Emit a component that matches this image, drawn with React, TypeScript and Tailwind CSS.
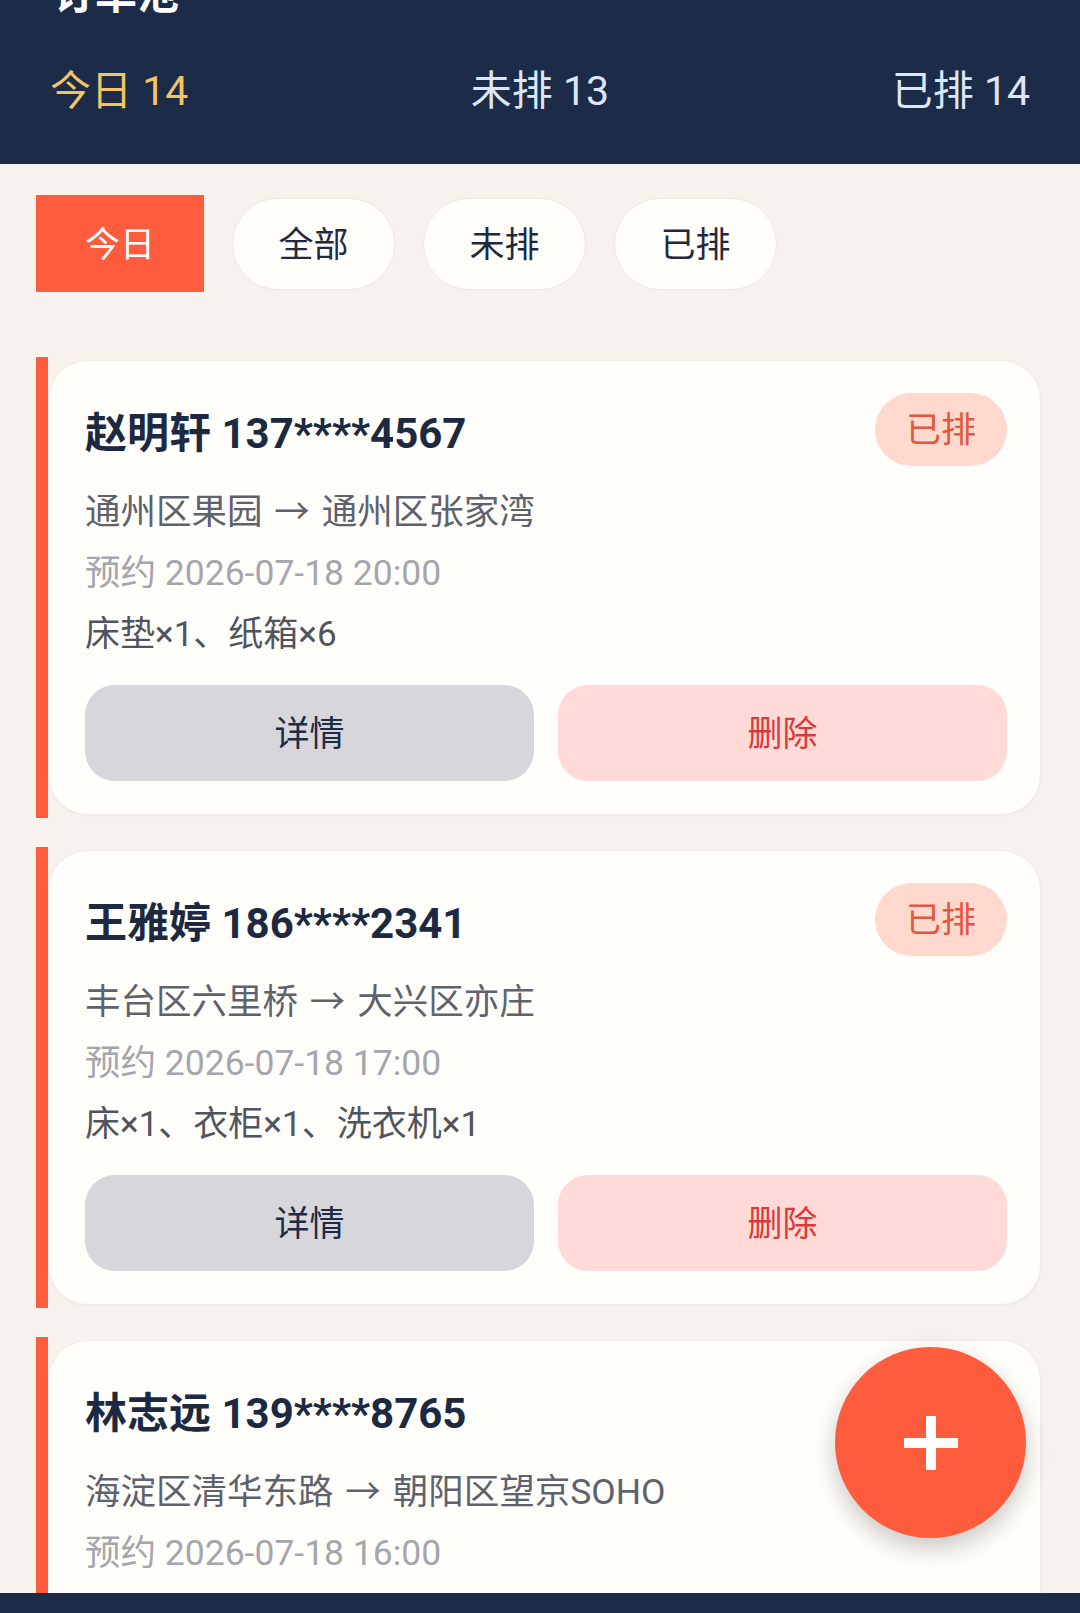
import { useState } from 'react';

interface Order {
    id: number;
    name: string;
    phone: string;
    from: string;
    to: string;
    time: string;
    items: string;
    status: '已排' | '未排';
}

const ORDERS: Order[] = [
    { id: 1, name: '赵明轩', phone: '137****4567', from: '通州区果园', to: '通州区张家湾', time: '2026-07-18 20:00', items: '床垫×1、纸箱×6', status: '已排' },
    { id: 2, name: '王雅婷', phone: '186****2341', from: '丰台区六里桥', to: '大兴区亦庄', time: '2026-07-18 17:00', items: '床×1、衣柜×1、洗衣机×1', status: '已排' },
    { id: 3, name: '林志远', phone: '139****8765', from: '海淀区清华东路', to: '朝阳区望京SOHO', time: '2026-07-18 16:00', items: '沙发×1、餐桌×1', status: '未排' },
];

const TABS = ['今日', '全部', '未排', '已排'] as const;

function OrderCard({ order }: { order: Order }) {
    return (
        <div className="flex">
            <div className="w-[12px] shrink-0 bg-[#ff5b3d]" />
            <div className="my-[3px] flex-1 rounded-[40px] border border-[#f1ece7] bg-[#fffefa] pt-[32px] pb-[33px] pl-[36px] pr-[33px] shadow-[0_1px_3px_rgba(0,0,0,0.04)]">
                <div className="flex h-[73px] items-center justify-between">
                    <span className="pt-[8px] text-[42px] font-bold leading-none text-[#1c2940]">
                        {order.name} {order.phone}
                    </span>
                    <span className="flex h-[73px] items-center rounded-full bg-[#ffd9ce] px-[31px] pt-[3px] text-[35px] text-[#e2573f]">
                        {order.status}
                    </span>
                </div>
                <div className="mt-[16px] text-[35.5px] leading-[61px] text-[#5d626c]">
                    {order.from} <span className="mx-[3px]">→</span> {order.to}
                </div>
                <div className="text-[35.5px] leading-[61px] text-[#a4a6ad]">预约 {order.time}</div>
                <div className="text-[35px] leading-[61px] text-[#50545d]">{order.items}</div>
                <div className="mt-[20px] flex gap-[24px]">
                    <button className="h-[96px] flex-1 rounded-[30px] bg-[#d7d7db] pt-[4px] text-[35px] text-[#1f2a44]">详情</button>
                    <button className="h-[96px] flex-1 rounded-[30px] bg-[#ffdad6] pt-[4px] text-[35px] text-[#d83a3c]">删除</button>
                </div>
            </div>
        </div>
    );
}

export default function App() {
    const [tab, setTab] = useState<typeof TABS[number]>('今日');

    return (
        <div className="relative h-[1613px] w-[1080px] overflow-hidden bg-[#f7f2ee] font-['Roboto','Noto_Sans_CJK_SC',sans-serif]">
            {/* Header */}
            <div className="flex h-[164px] flex-col bg-[#1c2b48]">
                <div className="-mt-[30px] px-[53px] text-[42px] font-bold leading-[50px] text-white">订单池</div>
                <div className="mt-[41px] flex justify-between px-[50px] text-[41px] leading-[60px]">
                    <span className="text-[#f2c466]">今日 14</span>
                    <span className="text-[#dce6f4]">未排 13</span>
                    <span className="text-[#dce6f4]">已排 14</span>
                </div>
            </div>

            {/* Tabs */}
            <div className="mt-[31px] flex items-center gap-[28px] px-[36px]">
                {TABS.map(t => (
                    <button key={t}
                        onClick={() => setTab(t)}
                        className={tab === t
                            ? 'h-[97px] w-[168px] bg-[#ff5b3d] pt-[6px] text-[35px] text-white'
                            : 'h-[92px] w-[163px] rounded-full border border-[#efe9e3] bg-[#fffefa] pt-[6px] text-[35px] text-[#1f2a40]'}>
                        {t}
                    </button>
                ))}
            </div>

            {/* Orders */}
            <div className="mt-[65px] flex flex-col gap-[29px] pl-[36px] pr-[39px]">
                {ORDERS.map(o => <OrderCard key={o.id} order={o} />)}
            </div>

            {/* FAB */}
            <button className="absolute bottom-[75px] right-[54px] flex h-[191px] w-[191px] items-center justify-center rounded-full bg-[#ff5b3d] shadow-[0_10px_24px_rgba(0,0,0,0.22)]">
                <svg width="54" height="54" viewBox="0 0 54 54">
                    <path d="M27 0v54M0 27h54" stroke="white" strokeWidth="10" />
                </svg>
            </button>

            {/* bottom bar */}
            <div className="absolute bottom-0 left-0 h-[20px] w-full bg-[#1c2b48]" />
        </div>
    );
}
